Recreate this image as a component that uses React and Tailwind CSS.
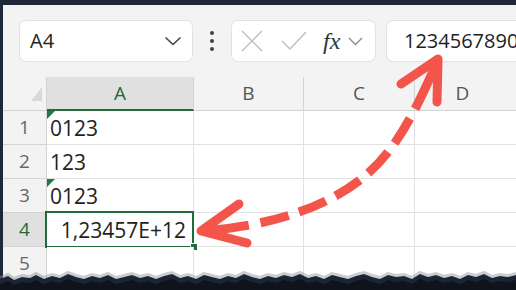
import React from 'react';

const torn = [
  [0, 279], [8, 276], [14, 280], [22, 277], [30, 278], [36, 275], [44, 279], [52, 276], [60, 278], [68, 274],
  [76, 277], [84, 279], [92, 276], [100, 278], [108, 275], [116, 279], [124, 277], [132, 275], [140, 278], [148, 276],
  [156, 279], [164, 276], [172, 274], [180, 278], [188, 276], [196, 279], [204, 275], [212, 277], [220, 279], [228, 276],
  [236, 278], [244, 274], [252, 277], [260, 279], [268, 276], [276, 278], [284, 275], [292, 277], [300, 274], [308, 278],
  [316, 276], [324, 279], [332, 275], [340, 277], [348, 279], [356, 276], [364, 274], [372, 277], [380, 279], [388, 275],
  [396, 277], [404, 276], [412, 279], [420, 274], [428, 277], [436, 275], [444, 278], [452, 276], [460, 279], [468, 275],
  [476, 277], [484, 274], [492, 278], [500, 276], [508, 277], [516, 275],
];

const edge = torn.map(([x, y]) => `${x},${y}`).join(' ');

const rows = [
  { n: 1, value: '0123', flag: true },
  { n: 2, value: '123' },
  { n: 3, value: '0123', flag: true },
  { n: 4, value: '1,23457E+12', right: true, active: true },
  { n: 5, value: '' },
];

const Overlay = () => (
  <svg className="absolute inset-0 pointer-events-none" width="516" height="290" viewBox="0 0 516 290">
    <path
      d="M205 231 C 280 224, 330 205, 365 176 S 420 100, 438 60"
      fill="none"
      stroke="#f4554a"
      strokeWidth="9"
      strokeDasharray="44 12 29 11 29 11 29 11 29 11 29 11 40 0"
    />
    <polyline points="239,204 201,231 247,243" fill="none" stroke="#f4554a" strokeWidth="9" strokeLinecap="round" strokeLinejoin="round" />
    <polyline points="401,84 438,59 437,102" fill="none" stroke="#f4554a" strokeWidth="9" strokeLinecap="round" strokeLinejoin="round" />
    <polyline points={edge} fill="none" stroke="#8a9099" strokeWidth="3" strokeOpacity="0.45" transform="translate(0,-1.5)" />
    <polygon points={`${edge} 516,290 0,290`} fill="#1c2532" />
    <polygon points={`${edge} 516,290 0,290`} fill="#0f141c" transform="translate(0,5)" />
  </svg>
);

const App = () => {
  return (
    <div className="relative w-[516px] h-[290px] overflow-hidden bg-[#1e2838] pt-[5px] pl-[3px] font-['Open_Sans','Noto_Sans',sans-serif]">
      <div className="h-full bg-[#f3f3f3] flex flex-col">
        {/* formula bar */}
        <div className="h-[72px] flex items-center shrink-0">
          <div className="ml-[16px] w-[174px] h-[42px] bg-white rounded-[7px] border border-[#e2e2e2] flex items-center justify-between pl-[10px] pr-[10px]">
            <span className="text-[20px] text-[#222]">A4</span>
            <svg width="18" height="10" viewBox="0 0 18 10">
              <polyline points="1.5,1.5 9,8.5 16.5,1.5" fill="none" stroke="#444" strokeWidth="1.6" />
            </svg>
          </div>
          <div className="w-[38px] flex flex-col items-center gap-[4px]">
            <span className="w-[4px] h-[4px] rounded-full bg-[#444]" />
            <span className="w-[4px] h-[4px] rounded-full bg-[#444]" />
            <span className="w-[4px] h-[4px] rounded-full bg-[#444]" />
          </div>
          <div className="w-[145px] h-[42px] bg-white rounded-[7px] border border-[#e2e2e2] flex items-center pl-[9px]">
            <svg width="22" height="22" viewBox="0 0 22 22">
              <path d="M1 1 L21 21 M21 1 L1 21" stroke="#bdbdbd" strokeWidth="1.4" />
            </svg>
            <svg className="ml-[18px]" width="26" height="20" viewBox="0 0 26 20">
              <polyline points="1,10 9,18 25,1" fill="none" stroke="#bdbdbd" strokeWidth="1.4" />
            </svg>
            <span className="ml-[16px] font-['Liberation_Serif',serif] italic text-[24px] leading-none text-[#333]">fx</span>
            <svg className="ml-[8px]" width="15" height="9" viewBox="0 0 15 9">
              <polyline points="1,1 7.5,7.5 14,1" fill="none" stroke="#888" strokeWidth="1.3" />
            </svg>
          </div>
          <div className="ml-[10px] flex-1 h-[42px] bg-white rounded-l-[7px] border border-r-0 border-[#e2e2e2] flex items-center pl-[17px] overflow-hidden">
            <span className="text-[20px] text-[#222] whitespace-nowrap">12345678901234</span>
          </div>
        </div>

        {/* sheet */}
        <div className="grid grid-cols-[44px_147px_110px_111px_1fr] grid-rows-[34px_repeat(5,34px)] text-[#222]">
          <div className="relative border-r border-b border-[#d4d4d4]">
            <svg className="absolute right-[4px] bottom-[9px]" width="11" height="14" viewBox="0 0 11 14">
              <polygon points="11,0 11,14 0,14" fill="#d9d9d9" />
            </svg>
          </div>
          <div className="bg-[#e0e0e0] border-r border-[#d4d4d4] border-b-2 border-b-[#1f6b3b] flex items-center justify-center text-[19px] text-[#1f6b3b]">A</div>
          <div className="border-r border-b border-[#d4d4d4] flex items-center justify-center text-[19px] text-[#555]">B</div>
          <div className="border-r border-b border-[#d4d4d4] flex items-center justify-center text-[19px] text-[#555]">C</div>
          <div className="border-b border-[#d4d4d4] flex items-center justify-center text-[19px] text-[#555] pr-[6px]">D</div>

          {rows.map((r) => (
            <React.Fragment key={r.n}>
              <div
                className={`border-r border-b border-[#d4d4d4] flex items-center justify-center text-[19px] ${
                  r.active ? 'bg-[#e0e0e0] text-[#1f6b3b]' : 'text-[#666]'
                }`}
              >
                {r.n}
              </div>
              <div
                className={`relative bg-white border-r border-b border-[#e1e1e1] flex items-center text-[21px] ${
                  r.right ? 'justify-end pr-[7px]' : 'pl-[3px]'
                }`}
              >
                {r.flag && (
                  <span className="absolute top-0 left-0 w-0 h-0 border-t-[8px] border-r-[8px] border-t-[#1f7a45] border-r-transparent" />
                )}
                <span className="pt-[2px]">{r.value}</span>
                {r.active && (
                  <>
                    <span className="absolute -top-[2px] -left-[2px] -right-[1px] -bottom-[2px] border-[2.5px] border-[#1f6b3b]" />
                    <span className="absolute -right-[5px] -bottom-[5px] w-[8px] h-[8px] bg-[#1f6b3b] border border-white" />
                  </>
                )}
              </div>
              <div className="bg-white border-r border-b border-[#e1e1e1]" />
              <div className="bg-white border-r border-b border-[#e1e1e1]" />
              <div className="bg-white border-b border-[#e1e1e1]" />
            </React.Fragment>
          ))}
        </div>
      </div>
      <Overlay />
    </div>
  );
};

export default App;
